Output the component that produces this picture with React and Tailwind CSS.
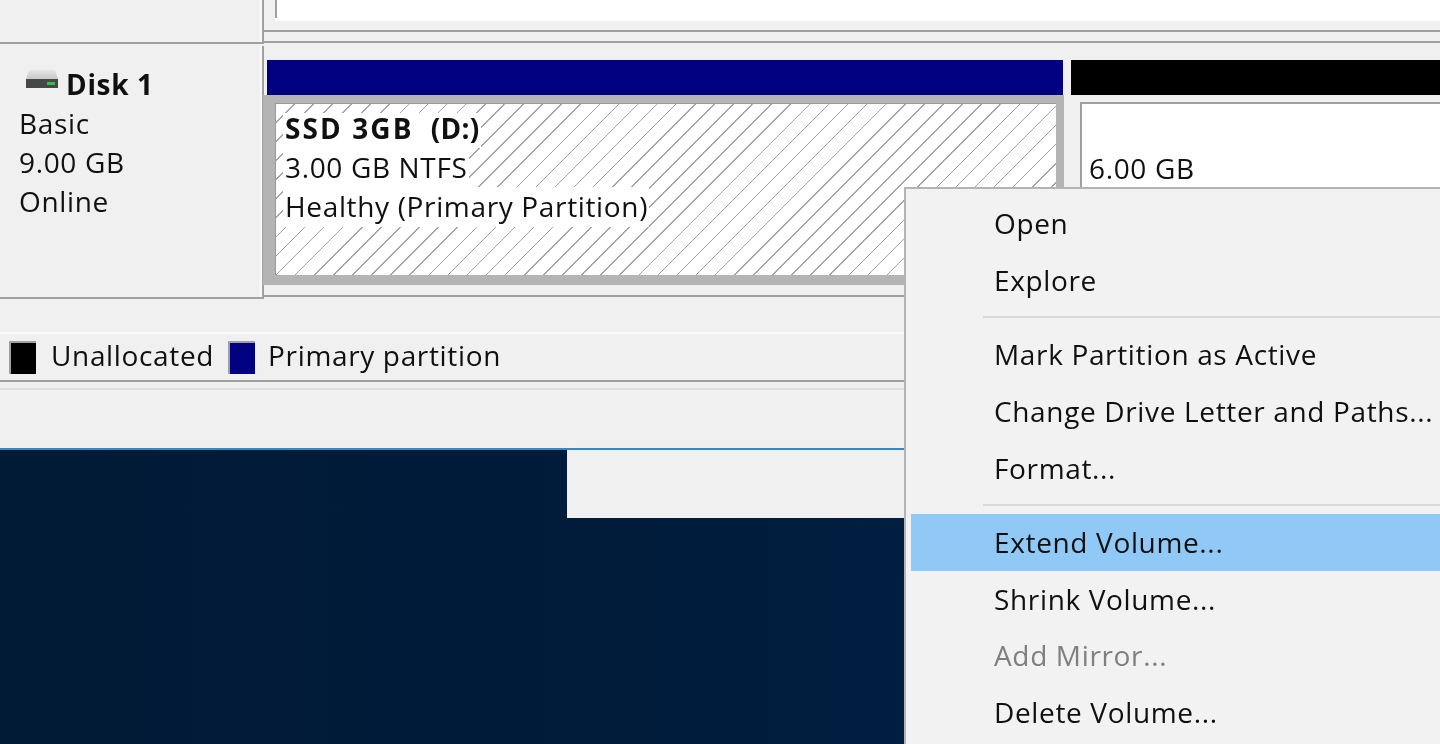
const font = { fontFamily: '"Open Sans", sans-serif' };

function Legend({ color, label, textClass }) {
  return (
    <div className="flex items-center">
      <span className={`h-[33px] w-[27px] border-t-2 border-l-2 border-[#a0a0a0] ${color}`} />
      <span className={`-mt-[4px] text-[28px] leading-none tracking-[0.65px] ${textClass}`}>{label}</span>
    </div>
  );
}

const items = [
  ["Open"], ["Explore"], "sep",
  ["Mark Partition as Active"], ["Change Drive Letter and Paths..."], ["Format..."], "sep",
  ["Extend Volume...", "hi"], ["Shrink Volume..."], ["Add Mirror...", "dis"], ["Delete Volume..."],
];

function Menu() {
  return (
    <div className="absolute left-[904px] top-[187px] z-10 h-[600px] w-[560px] border-t-2 border-l-2 border-[#b4b4b4] bg-[#f2f2f2] pt-[6px] pl-[5px] text-[28px] tracking-[0.65px]">
      {items.map((it, i) =>
        it === "sep" ? (
          <div key={i} className="ml-[72px] my-[8px] h-[2px] bg-[#d8d8d8]" />
        ) : (
          <div key={i} className={`h-[56.6px] flex items-center pl-[83px] ${it[1] === "hi" ? "bg-[#90c8f6]" : ""} ${it[1] === "dis" ? "text-[#7f7f7f]" : "text-[#101010]"}`}>
            {it[0]}
          </div>
        )
      )}
    </div>
  );
}

export default function App() {
  return (
    <div style={font} className="relative h-[744px] w-[1440px] overflow-hidden bg-[#f0f0f0] text-[#101010] blur-[0.4px]">
      <div className="flex h-[46px]">
        <div className="h-[44px] w-[264px] border-r-2 border-b-2 border-[#a0a0a0]">
          <div className="h-full border-r-2 border-[#fafafa]" />
        </div>
        <div className="flex-1">
          <div className="h-[32px] border-b-2 border-[#a0a0a0] pl-[11px]">
            <div className="h-[21px] bg-white">
              <div className="h-[18px] w-[2px] bg-[#a0a0a0]" />
            </div>
          </div>
          <div className="h-[11px] border-b-2 border-[#a0a0a0]" />
        </div>
      </div>

      <div className="flex h-[253px]">
        <div className="w-[264px] border-r-2 border-b-2 border-[#a0a0a0] text-[28px] leading-[39px] tracking-[0.65px]">
          <div className="h-full border-r-2 border-[#fafafa] pl-[19px] pt-[18px]">
            <div className="flex items-center h-[40px] font-bold">
              <svg width="34" height="24" viewBox="0 0 34 24" className="ml-[6px] mr-[7px] -mt-[6px]">
                <defs>
                  <linearGradient id="drivetop" x1="0" y1="0" x2="0" y2="1">
                    <stop offset="0" stopColor="#e6e6e6" />
                    <stop offset="1" stopColor="#c8c8c8" />
                  </linearGradient>
                </defs>
                <path d="M4 1h26l3 9H1z" fill="url(#drivetop)" />
                <rect x="1" y="10" width="32" height="9" fill="#454a48" />
                <rect x="22" y="13" width="8" height="3" fill="#35c03a" />
              </svg>
              Disk 1
            </div>
            <div>Basic</div>
            <div>9.00 GB</div>
            <div>Online</div>
          </div>
        </div>
        <div className="mb-[2px] flex flex-1 flex-col border-b-2 border-[#a0a0a0] pt-[14px] pb-[10px]">
          <div className="flex flex-1">
            <div className="flex w-[800px] flex-col">
              <div className="ml-[3px] h-[35px] w-[796px] bg-[#000080]" />
              <div className="-ml-[1px] w-[801px] flex-1 border-t-[8px] border-b-[10px] border-r-[8px] border-l-[12px] border-[#b4b4b4]">
                <div
                  className="h-full border-t border-l border-[#9a9a9a] bg-white pl-[7px] pt-[9px] text-[28px]"
                  style={{ backgroundImage: "repeating-linear-gradient(135deg, #ffffff 0 12.4px, #a4a4a4 12.4px 13.5px)" }}
                >
                  <div className="h-[35px] w-fit bg-white pl-[2px] pr-[1px] font-bold leading-[30px]">
                    <span className="tracking-[2.1px]">SSD 3GB</span>
                    <span className="ml-[17px] tracking-[0.3px]">(D:)</span>
                  </div>
                  <div className="h-[39px] w-fit bg-white pl-[2px] pr-[1px] leading-[39px] tracking-[0.65px]">3.00 GB NTFS</div>
                  <div className="h-[40px] w-fit bg-white pl-[2px] pr-[1px] leading-[39px] tracking-[0.65px]">Healthy (Primary Partition)</div>
                </div>
              </div>
            </div>
            <div className="flex flex-1 flex-col pl-[7px]">
              <div className="h-[35px] bg-black" />
              <div className="ml-[9px] mt-[7px] flex-1 border-t-2 border-l-2 border-[#a0a0a0] bg-white pl-[7px] pt-[45px] text-[28px] leading-[39.5px] tracking-[0.65px]">
                6.00 GB
              </div>
            </div>
          </div>
        </div>
      </div>

      <div className="h-[33px]" />
      <div className="flex h-[50px] items-center border-t-2 border-b-2 border-t-[#fafafa] border-b-[#a0a0a0] pl-[9px]">
        <Legend color="bg-black" label="Unallocated" textClass="ml-[15px] mr-[14px]" />
        <Legend color="bg-[#000080]" label="Primary partition" textClass="ml-[13px]" />
      </div>
      <div className="mt-[6px] h-[60px] border-t-2 border-[#e0e0e0]" />

      <div className="h-[2px] bg-[#2f8ac8]" />
      <div className="h-[400px] bg-gradient-to-r from-[#011a36] via-[#001c3c] to-[#00234a]">
        <div className="ml-[567px] h-[68px] bg-[#f0f0f0]" />
      </div>

      <Menu />
    </div>
  );
}
